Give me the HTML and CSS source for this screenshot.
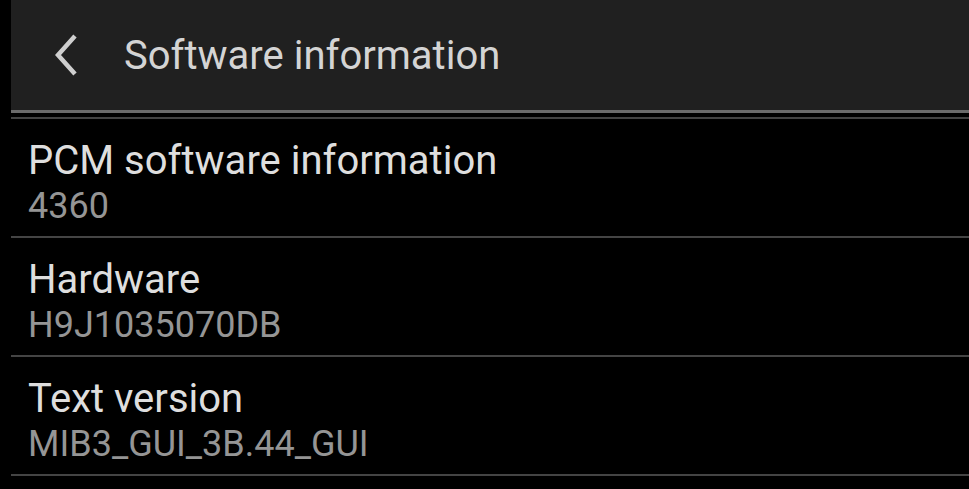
FILE: index.html
```html
<!DOCTYPE html>
<html lang="en">
<head>
  <meta charset="UTF-8" />
  <meta name="viewport" content="width=device-width, initial-scale=1.0"/>
  <title>Software information</title>
  <link rel="stylesheet" href="styles.css">
</head>
<body>

  <div class="screen">
    <header class="topbar">
      <svg class="back" width="30" height="44" viewBox="0 0 30 44">
        <polyline points="20,3 3,22 20,41" fill="none" stroke="#cfcfcf" stroke-width="4.5"/>
      </svg>
      <h1 class="title">Software information</h1>
    </header>

    <ul class="list">
      <li class="item">
        <div class="item-title">PCM software information</div>
        <div class="item-value">4360</div>
      </li>
      <li class="item">
        <div class="item-title">Hardware</div>
        <div class="item-value">H9J1035070DB</div>
      </li>
      <li class="item">
        <div class="item-title">Text version</div>
        <div class="item-value">MIB3_GUI_3B.44_GUI</div>
      </li>
    </ul>
  </div>

</body>
</html>
```

FILE: styles.css
```css
body {
  margin: 0;
  background-color: #000;
  font-family: Roboto, 'Liberation Sans', sans-serif;
  overflow: hidden;
}
.screen {
  padding-left: 11px;
}
.topbar {
  height: 113px;
  box-sizing: border-box;
  background-color: #202020;
  border-bottom: 3px solid #6b6b6b;
  display: flex;
  align-items: center;
  padding-left: 44px;
}
.title {
  margin: 0 0 0 39px;
  font-size: 40px;
  font-weight: normal;
  color: #d4d4d4;
}
.list {
  list-style: none;
  margin: 4px 0 0 0;
  padding: 0;
  border-top: 2px solid #444;
}
.item {
  height: 119px;
  box-sizing: border-box;
  border-bottom: 2px solid #444;
  padding: 19px 0 0 17px;
}
.item-title {
  font-size: 40px;
  line-height: 46px;
  color: #dedede;
}
.item-value {
  font-size: 36px;
  line-height: 42px;
  margin-top: 1px;
  color: #959595;
}
```
